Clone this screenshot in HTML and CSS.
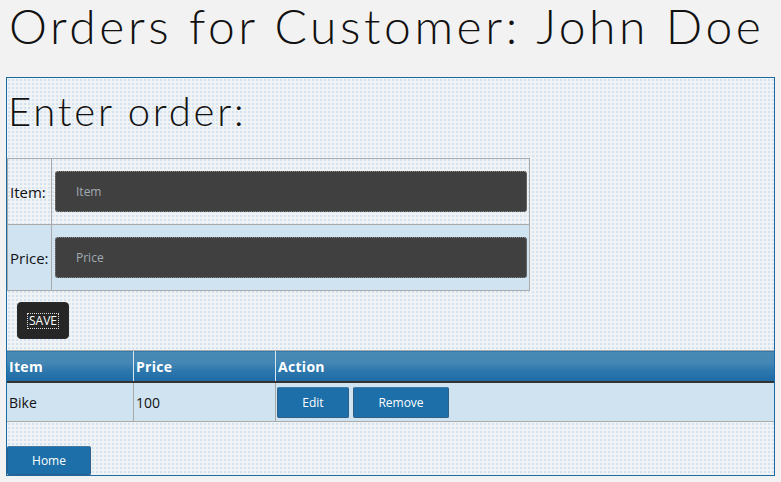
FILE: index.html
```html
<!DOCTYPE html>
<html>
<head>
<meta charset="utf-8">
<link rel="stylesheet" href="styles.css">
</head>
<body>
<h1 class="title">Orders for Customer: John Doe</h1>
<div class="panel">
  <h2 class="subtitle">Enter order:</h2>
  <table class="form-table">
    <tr class="row-plain">
      <td class="label">Item:</td>
      <td class="field"><input class="input" type="text" placeholder="Item"></td>
    </tr>
    <tr class="row-alt">
      <td class="label">Price:</td>
      <td class="field"><input class="input" type="text" placeholder="Price"></td>
    </tr>
  </table>
  <div class="save-row"><button class="save"><span class="focus">SAVE</span></button></div>
  <table class="orders">
    <thead>
      <tr>
        <th class="col-item">Item</th>
        <th class="col-price">Price</th>
        <th class="col-action">Action</th>
      </tr>
    </thead>
    <tbody>
      <tr>
        <td>Bike</td>
        <td>100</td>
        <td class="actions"><button class="btn btn-edit">Edit</button><button class="btn btn-remove">Remove</button></td>
      </tr>
    </tbody>
  </table>
  <div class="home-row"><button class="btn btn-home">Home</button></div>
</div>
</body>
</html>
```
FILE: styles.css
```css
html, body {
  margin: 0;
  padding: 0;
  background: #f2f2f2;
}
body {
  padding: 0 6px;
  font-family: "Open Sans", "Noto Sans", sans-serif;
  color: #111;
}
.title {
  margin: 0 0 25px 3px;
  font-family: Lato, sans-serif;
  font-weight: 300;
  font-size: 48px;
  line-height: 52px;
  letter-spacing: 3.6px;
  color: #111;
  white-space: nowrap;
}
.panel {
  border: 1px solid #1a6ba5;
  background-color: #f1f2f4;
  background-image: radial-gradient(circle, #cfe2f3 0.7px, transparent 1px);
  background-size: 4px 4px;
  height: 399px;
  box-sizing: border-box;
}
.subtitle {
  margin: 9px 0 23px 1px;
  font-family: Lato, sans-serif;
  font-weight: 300;
  font-size: 40px;
  line-height: 48px;
  letter-spacing: 2.8px;
  color: #111;
}
.form-table {
  border-collapse: collapse;
  width: 523px;
}
.form-table td {
  border: 1px solid #aaa;
}
.row-alt {
  background: #d0e3f1;
}
.label {
  width: 41px;
  padding: 0 0 0 2px;
  font-size: 15px;
  white-space: nowrap;
}
.field {
  padding: 12px 1px 12px 3px;
}
.input {
  display: block;
  box-sizing: border-box;
  width: 472px;
  height: 41px;
  margin: 0;
  padding: 0 0 0 20px;
  border: 1px dotted #888;
  border-radius: 3px;
  background: #404040;
  font-family: "Open Sans", sans-serif;
  font-size: 12px;
  color: #ddd;
  outline: none;
}
.input::placeholder {
  color: #a2abb4;
}
.save-row {
  padding: 11px 0 11px 10px;
}
.save {
  display: flex;
  align-items: center;
  justify-content: center;
  width: 52px;
  height: 37px;
  padding: 0;
  border: 1px solid #2a2a2a;
  border-radius: 4px;
  background: #262626;
  cursor: pointer;
}
.focus {
  border: 1px dotted #ddd;
  padding: 0 1px;
  font-family: "Open Sans", sans-serif;
  font-size: 12px;
  line-height: 14px;
  color: #fff;
}
.orders {
  border-collapse: collapse;
  width: 100%;
}
.orders th {
  height: 30px;
  padding: 0 0 0 2px;
  text-align: left;
  font-size: 14px;
  font-weight: 700;
  color: #fff;
  background: linear-gradient(#4889b5 0%, #4688b5 35%, #2c77ad 65%, #1c69a4 100%);
  border-top: 1px solid #aaa;
  border-bottom: 2px solid #333;
  border-left: 1px solid #d8e6f0;
  letter-spacing: 0.3px;
}
.orders th:first-child {
  border-left: none;
}
.col-item { width: 124px; }
.col-price { width: 139px; }
.orders td {
  height: 38px;
  padding: 0 0 0 2px;
  background: #d0e3f1;
  border-bottom: 1px solid #aaa;
  border-left: 1px solid #aaa;
  font-size: 14px;
}
.orders td:first-child {
  border-left: none;
}
.orders td.actions {
  padding: 0 0 0 1px;
}
.actions {
  white-space: nowrap;
}
.btn {
  box-sizing: border-box;
  padding: 0;
  border: 1px solid #2d5f88;
  border-top-color: #3f79a6;
  border-radius: 2px;
  background: #1c6fa9;
  color: #fff;
  font-family: "Open Sans", sans-serif;
  font-size: 12px;
  vertical-align: middle;
  cursor: pointer;
}
.btn-edit {
  width: 72px;
  height: 31px;
  margin-right: 4px;
}
.btn-remove {
  width: 96px;
  height: 31px;
}
.home-row {
  padding-top: 24px;
}
.btn-home {
  display: block;
  width: 84px;
  height: 29px;
}
```
